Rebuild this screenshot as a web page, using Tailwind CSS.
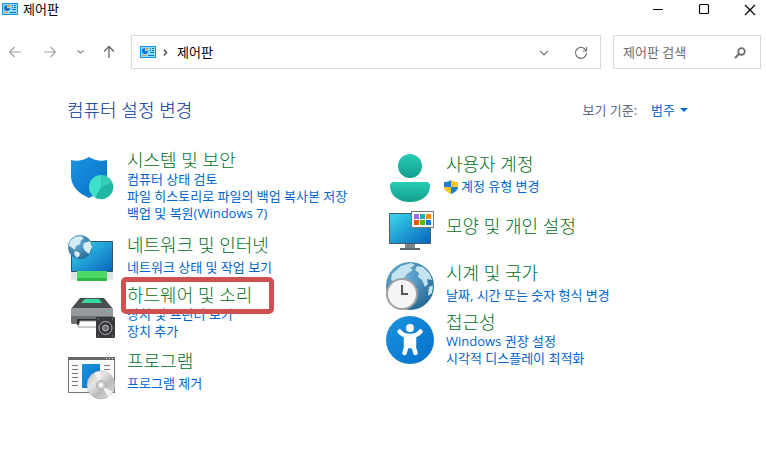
<!DOCTYPE html>
<html lang="ko">
<head>
  <meta charset="UTF-8">
  <meta name="viewport" content="width=device-width, initial-scale=1.0">
  <title>제어판</title>
  <script src="https://cdn.jsdelivr.net/npm/@tailwindcss/browser@4"></script>
</head>
<body class="bg-white text-[13px] leading-[17px] text-black font-['Open_Sans','Noto_Sans_CJK_KR',sans-serif]">
  <svg class="absolute h-0 w-0" aria-hidden="true">
    <defs>
      <linearGradient id="blue" x1="0" y1="0" x2="1" y2="1"><stop offset="0" stop-color="#1b93e0"/><stop offset="1" stop-color="#0670c8"/></linearGradient>
      <linearGradient id="screen" x1="0" y1="0" x2="1" y2="1"><stop offset="0" stop-color="#38d8ea"/><stop offset="1" stop-color="#0864bd"/></linearGradient>
      <linearGradient id="teal" x1="0" y1="0" x2="0" y2="1"><stop offset="0" stop-color="#27ccb5"/><stop offset="1" stop-color="#129e8b"/></linearGradient>
      <radialGradient id="sea" cx=".35" cy=".3" r=".75"><stop offset="0" stop-color="#72b6dc"/><stop offset="1" stop-color="#236a96"/></radialGradient>
      <linearGradient id="disc" x1="0" y1="0" x2="1" y2="1"><stop offset="0" stop-color="#b9b9b9"/><stop offset=".35" stop-color="#e6e6e6"/><stop offset=".6" stop-color="#bcbcbc"/><stop offset="1" stop-color="#dedede"/></linearGradient>
      <symbol id="panel" viewBox="0 0 16 12">
        <rect width="16" height="12" fill="#1596e4"/>
        <rect x="1" y="1" width="14" height="10" fill="#8cdcfc"/>
        <path d="M5 2a3 3 0 1 0 3 3H5z" fill="#1273c9"/>
        <path d="M6 1.500a3 3 0 0 1 2.500 2.500H6z" fill="#f29a2e"/>
        <path d="M10 2.500h1M12 2.500h2M10 4.500h1M12 4.500h2M10 6.500h4" stroke="#1273c9"/>
        <path d="M2 9.500h4" stroke="#f29a2e"/>
        <path d="M8 9.500h6" stroke="#1273c9"/>
      </symbol>
    </defs>
  </svg>

  <!-- title bar -->
  <header class="flex h-[18px] items-center justify-between pl-[2px] pr-[8px]">
    <div class="flex items-center gap-[5px]">
      <svg class="h-3 w-4"><use href="#panel"/></svg>
      <h1>제어판</h1>
    </div>
    <div class="flex items-center gap-[30px]">
      <button type="button" aria-label="최소화"><svg class="block h-4 w-4" viewBox="0 0 16 16" fill="none" stroke="#000"><path d="M3 8.500h10"/></svg></button>
      <button type="button" aria-label="최대화"><svg class="block h-4 w-4" viewBox="0 0 16 16" fill="none" stroke="#000" stroke-width="1.200"><rect x="3.500" y="3.500" width="9" height="9" rx="1"/></svg></button>
      <button type="button" aria-label="닫기"><svg class="block h-4 w-4" viewBox="0 0 16 16" fill="none" stroke="#000" stroke-width="1.200"><path d="M3 4l10 10M13 4L3 14"/></svg></button>
    </div>
  </header>

  <!-- navigation -->
  <nav class="mt-[17px] flex h-[34px] items-center pl-[7px] pr-[5px]">
    <div class="flex w-[124px] shrink-0 items-center">
      <button type="button" aria-label="뒤로" class="mr-[19px]"><svg class="block h-4 w-4" viewBox="0 0 16 16" fill="none" stroke="#a3a3a3" stroke-width="1.200"><path d="M14 8H2.500M7.500 3l-5 5 5 5"/></svg></button>
      <button type="button" aria-label="앞으로" class="mr-[15px]"><svg class="block h-4 w-4" viewBox="0 0 16 16" fill="none" stroke="#a3a3a3" stroke-width="1.200"><path d="M2 8h11.500M8.500 3l5 5-5 5"/></svg></button>
      <button type="button" aria-label="최근 위치" class="mr-[12px]"><svg class="block h-4 w-4" viewBox="0 0 16 16" fill="none" stroke="#8a8a8a" stroke-width="1.300"><path d="M4.500 6.500L7.500 9l3-2.500"/></svg></button>
      <button type="button" aria-label="위로"><svg class="block h-4 w-4" viewBox="0 0 16 16" fill="none" stroke="#666" stroke-width="1.300"><path d="M8 14V2.500M3 7.500l5-5 5 5"/></svg></button>
    </div>
    <div class="flex h-full flex-1 items-center border border-[#d9d9d9] pl-2 pr-[11px]">
      <svg class="h-3 w-4"><use href="#panel"/></svg>
      <svg class="ml-1 h-3 w-3" viewBox="0 0 12 12" fill="none" stroke="#555" stroke-width="1.500"><path d="M4 3.500l2.500 3L4 9.500"/></svg>
      <a href="#" class="ml-[5px]">제어판</a>
      <button type="button" aria-label="이전 위치" class="ml-auto"><svg class="block h-4 w-4" viewBox="0 0 16 16" fill="none" stroke="#777" stroke-width="1.200"><path d="M4 7l4 4 4-4"/></svg></button>
      <button type="button" aria-label="새로 고침" class="ml-[21px]"><svg class="block h-4 w-4" viewBox="0 0 16 16" fill="none" stroke="#777" stroke-width="1.200"><path d="M13 6.500A5.500 5.500 0 1 0 13.500 9M13.500 3v4h-4"/></svg></button>
    </div>
    <form class="ml-3 flex h-full w-[148px] items-center border border-[#d9d9d9] pl-[9px] pr-3">
      <input type="search" aria-label="제어판 검색" placeholder="제어판 검색" class="min-w-0 flex-1 outline-none placeholder:text-[#6d6d6d]">
      <button type="button" aria-label="검색"><svg class="block h-4 w-4" viewBox="0 0 16 16" fill="none" stroke="#6b6b6b"><circle cx="9.500" cy="7.500" r="3.300" stroke-width="1.700"/><path d="M7 10l-4 4" stroke-width="2"/></svg></button>
    </form>
  </nav>

  <main class="pl-[67px] pr-[78px] pt-[31px]">
    <div class="flex h-5 items-center justify-between">
      <h2 class="text-[18px] font-light leading-5 text-[#003399]">컴퓨터 설정 변경</h2>
      <div class="flex items-center gap-[14px]">
        <span id="view-label" class="text-[#5f6b7a]">보기 기준:</span>
        <button type="button" aria-labelledby="view-label view-value" class="flex items-center gap-[5px] text-[#0066cc]">
          <span id="view-value">범주</span>
          <svg class="h-2 w-2" viewBox="0 0 8 8" fill="#0066cc"><path d="M0 2h8L4 6z"/></svg>
        </button>
      </div>
    </div>

    <div class="mt-[30px] grid grid-cols-2 gap-x-[17px] text-[#0066cc]">
      <div>
        <section class="flex items-start gap-3">
          <svg class="mt-1 h-[46px] w-12 shrink-0" viewBox="0 0 48 46">
            <path d="M22 3C17 6 10 8 4 6v16c0 11 9 18 18 22 9-4 18-11 18-22V6c-6 2-13 0-18-3z" fill="url(#blue)"/>
            <circle cx="34" cy="33" r="12" fill="#3fe0c8"/>
            <path d="M34 33l11-5a12 12 0 0 1-17 15.500z" fill="#20b7a3"/>
            <path d="M34 33V21a12 12 0 0 1 11 7z" fill="#36cbb5"/>
          </svg>
          <div class="pb-[13px]">
            <h3 class="text-[18px] font-light leading-5 text-[#00701a]"><a href="#">시스템 및 보안</a></h3>
            <ul class="mt-px">
              <li><a href="#">컴퓨터 상태 검토</a></li>
              <li><a href="#">파일 히스토리로 파일의 백업 복사본 저장</a></li>
              <li><a href="#">백업 및 복원(Windows 7)</a></li>
            </ul>
          </div>
        </section>

        <section class="flex items-start gap-3">
          <svg class="h-[46px] w-12 shrink-0" viewBox="0 0 48 46">
            <rect x="4" y="6" width="42" height="31" rx="1" fill="#34536a"/>
            <rect x="5" y="7" width="40" height="29" fill="url(#screen)"/>
            <rect x="4" y="37" width="42" height="8" rx="1" fill="#dfe5e5"/>
            <rect x="10" y="36" width="30" height="10" fill="#4cd964"/>
            <path d="M10 43h30v3H10z" fill="#2fb84a"/>
            <circle cx="13" cy="12" r="12" fill="url(#sea)"/>
            <path d="M3 6l5-4 6-1 3 3-3 1-1 4-4 2-1 4-4-3-2-1zM17 8l6-2 2 6-3 7-4-3-2-4zM8 16l4 1 1 3-3 3-3-4z" fill="#d6ecf5"/>
          </svg>
          <div class="pb-[9px]">
            <h3 class="text-[18px] font-light leading-5 text-[#00701a]"><a href="#">네트워크 및 인터넷</a></h3>
            <ul class="mt-1">
              <li><a href="#">네트워크 상태 및 작업 보기</a></li>
            </ul>
          </div>
        </section>

        <section class="flex items-start gap-3">
          <svg class="mt-3 h-[42px] w-12 shrink-0" viewBox="0 0 48 42">
            <path d="M13 1h24l9 11H4z" fill="#4a4c4f"/>
            <path d="M18 2h14l3 4H14z" fill="#35dba0"/>
            <rect x="4" y="11" width="42" height="16" rx="2" fill="#969a9f"/>
            <path d="M4 19h42v6a2 2 0 0 1-2 2H6a2 2 0 0 1-2-2z" fill="#6c7075"/>
            <rect x="40" y="14" width="3" height="1" fill="#40e080"/>
            <path d="M10 22h30v6H10z" fill="#292b2d"/>
            <path d="M13 24h24v6H11z" fill="#fff" stroke="#999"/>
            <rect x="29" y="20" width="19" height="21" rx="1" fill="#37393c"/>
            <circle cx="38.500" cy="31" r="6.500" fill="#303235" stroke="#b4b4b4"/>
            <circle cx="38.500" cy="31" r="3" fill="#707275" stroke="#bbb"/>
            <path d="M31 22h1M45 22h1M31 39h1M45 39h1" stroke="#999"/>
          </svg>
          <div class="relative pb-[11px]">
            <h3 class="text-[18px] font-light leading-5 text-[#00701a]"><a href="#">하드웨어 및 소리</a></h3>
            <ul class="mt-px">
              <li><a href="#">장치 및 프린터 보기</a></li>
              <li><a href="#">장치 추가</a></li>
            </ul>
            <!-- highlight frame -->
            <div class="pointer-events-none absolute -left-[6px] -top-2 h-[37px] w-[153px] rounded-[5px] border-[5px] border-[#cf5050]"></div>
          </div>
        </section>

        <section class="flex items-start gap-3">
          <svg class="mt-[5px] h-[44px] w-12 shrink-0" viewBox="0 0 48 44">
            <rect x="1.500" y="1.500" width="46" height="35" fill="#fafafa" stroke="#777"/>
            <path d="M1 1h47v3H1z" fill="#666"/>
            <path d="M39 2.500h1M42 2.500h1M45 2.500h1" stroke="#eee"/>
            <path d="M5 9.500h6M5 13.500h6M5 17.500h6M5 21.500h6M5 25.500h6M5 29.500h6M37 9.500h6M37 13.500h6" stroke="#777"/>
            <rect x="15" y="8" width="18" height="24" rx="1" fill="url(#blue)"/>
            <circle cx="34" cy="29" r="14" fill="url(#disc)" stroke="#aaa" stroke-width=".5"/>
            <path d="M34 29L27 17a14 14 0 0 1 7-2zM34 29l7 12a14 14 0 0 0 5-5z" fill="#f1f1f1"/>
            <circle cx="34" cy="29" r="4.500" fill="#d0d0d0" stroke="#aaa"/>
            <circle cx="34" cy="29" r="2" fill="#fff"/>
          </svg>
          <div>
            <h3 class="text-[18px] font-light leading-5 text-[#00701a]"><a href="#">프로그램</a></h3>
            <ul class="mt-1">
              <li><a href="#">프로그램 제거</a></li>
            </ul>
          </div>
        </section>
      </div>

      <div class="pt-1">
        <section class="flex items-start gap-3 pb-[9px]">
          <svg class="h-12 w-12 shrink-0" viewBox="0 0 48 48">
            <circle cx="24" cy="12" r="12" fill="url(#teal)"/>
            <path d="M8 28h32a4 4 0 0 1 4 4c0 10-9 16-20 16S4 42 4 32a4 4 0 0 1 4-4z" fill="url(#teal)"/>
          </svg>
          <div>
            <h3 class="text-[18px] font-light leading-5 text-[#00701a]"><a href="#">사용자 계정</a></h3>
            <ul class="mt-1">
              <li class="-ml-[2px]">
                <a href="#" class="flex items-center gap-[3px]">
                  <svg class="h-[14px] w-[14px]" viewBox="0 0 14 14">
                    <path d="M7 0C5 1.500 3 2 0 2v5h7z" fill="#1a7fd6"/>
                    <path d="M7 0c2 1.500 4 2 7 2v5H7z" fill="#fdc526"/>
                    <path d="M0 7c0 3.500 3.500 5.500 7 7V7z" fill="#fdc526"/>
                    <path d="M14 7c0 3.500-3.500 5.500-7 7V7z" fill="#1a7fd6"/>
                  </svg>
                  <span>계정 유형 변경</span>
                </a>
              </li>
            </ul>
          </div>
        </section>

        <section class="flex items-start gap-3 pb-[11px]">
          <svg class="h-10 w-12 shrink-0" viewBox="0 0 48 40">
            <path d="M19 33h10v4H19z" fill="#7c858c"/>
            <path d="M14 37h20v2H14z" fill="#5d666d"/>
            <rect x="3" y="2" width="42" height="31" rx="1" fill="#4b5b66"/>
            <rect x="4" y="3" width="40" height="29" fill="url(#screen)"/>
            <rect x="25.500" y=".5" width="22" height="16" fill="#fff" stroke="#777"/>
            <path d="M28 3h5v5h-5z" fill="#9d6fdb"/><path d="M34 3h5v5h-5z" fill="#12b0a5"/><path d="M40 3h5v5h-5z" fill="#ff8c00"/>
            <path d="M28 9h5v5h-5z" fill="#e2560f"/><path d="M34 9h5v5h-5z" fill="#5cb614"/><path d="M40 9h5v5h-5z" fill="#0878d8"/>
          </svg>
          <div class="pt-[5px]">
            <h3 class="text-[18px] font-light leading-5 text-[#00701a]"><a href="#">모양 및 개인 설정</a></h3>
          </div>
        </section>

        <section class="flex items-start gap-3 pb-[2px]">
          <svg class="h-12 w-12 shrink-0" viewBox="0 0 48 48">
            <circle cx="24" cy="24" r="24" fill="url(#sea)"/>
            <path d="M6 12L15 4l10-3 4 2-5 3 3 2-6 4-3 4-5 1-3 3-5-2zM31 4l6 1 7 7 2 6-5-1 1 5-3 3-3-7-4-3 1-4-4-3zM43 25l4-2-1 8-4 3z" fill="#c4e3f0"/>
            <circle cx="16" cy="32" r="15" fill="#f5f5f5" stroke="#a1a1a1" stroke-width="2"/>
            <path d="M16 23v9h6" fill="none" stroke="#555" stroke-width="2"/>
          </svg>
          <div class="pt-px">
            <h3 class="text-[18px] font-light leading-5 text-[#00701a]"><a href="#">시계 및 국가</a></h3>
            <ul class="mt-1">
              <li><a href="#">날짜, 시간 또는 숫자 형식 변경</a></li>
            </ul>
          </div>
        </section>

        <section class="flex items-start gap-3">
          <svg class="mt-1 h-12 w-12 shrink-0" viewBox="0 0 48 48">
            <circle cx="24" cy="24" r="24" fill="url(#blue)"/>
            <circle cx="24" cy="12" r="4" fill="#fff"/>
            <path d="M13.500 15.500C16 19 20 20 24 20s8-1 10.500-4.500M20 21h8v9h-8zM21.500 27l-3 10M26.500 27l3 10" fill="none" stroke="#fff" stroke-width="4.500" stroke-linecap="round" stroke-linejoin="round"/>
            <path d="M20 20h8v11h-8z" fill="#fff"/>
          </svg>
          <div>
            <h3 class="text-[18px] font-light leading-5 text-[#00701a]"><a href="#">접근성</a></h3>
            <ul class="mt-px">
              <li><a href="#">Windows 권장 설정</a></li>
              <li><a href="#">시각적 디스플레이 최적화</a></li>
            </ul>
          </div>
        </section>
      </div>
    </div>
  </main>
</body>
</html>
